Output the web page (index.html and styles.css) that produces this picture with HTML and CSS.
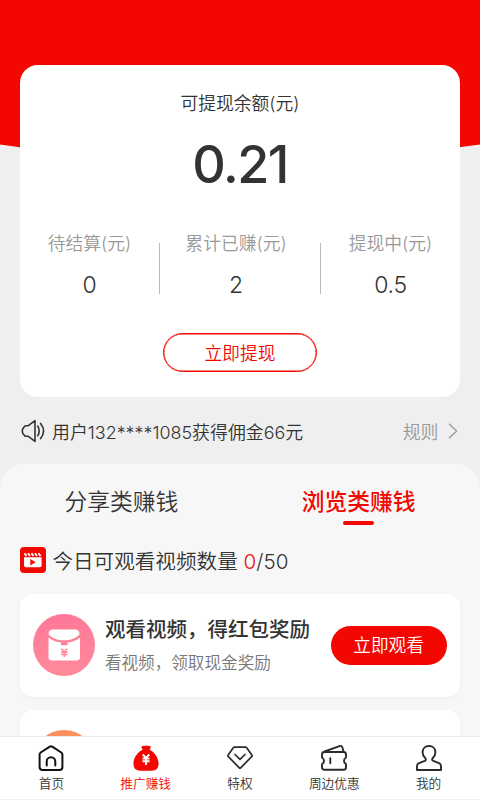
FILE: index.html
```html
<!DOCTYPE html>
<html lang="zh-CN">
<head>
<meta charset="utf-8">
<meta name="viewport" content="width=device-width, initial-scale=1">
<title>推广赚钱</title>
<link rel="stylesheet" href="styles.css">
</head>
<body>
<div class="app">
  <main class="content">
    <div class="hero"></div>
    <section class="balance">
      <div class="balance-label">可提现余额(元)</div>
      <div class="balance-value">0.21</div>
      <div class="stats">
        <div class="stat"><span class="stat-label">待结算(元)</span><span class="stat-value">0</span></div>
        <div class="stat stat-mid"><span class="stat-label">累计已赚(元)</span><span class="stat-value">2</span></div>
        <div class="stat"><span class="stat-label">提现中(元)</span><span class="stat-value">0.5</span></div>
      </div>
      <button class="withdraw">立即提现</button>
    </section>

    <div class="notice">
      <svg class="speaker" width="24" height="24" viewBox="0 0 24 24" fill="none" stroke="#333" stroke-width="1.6" stroke-linecap="round" stroke-linejoin="round">
        <path d="M14 1.600V22.400L7 17.200H4.600Q3.600 17.200 3.300 16.200L1.700 14.300Q.9 12 1.700 9.700L3.300 7.800Q3.600 6.800 4.600 6.800H7Z"/>
        <path d="M16.800 7.200Q19.600 12 16.800 16.800M19.600 4.400Q25.600 12 19.600 19.600"/>
      </svg>
      <span class="notice-text">用户132****1085获得佣金66元</span>
      <a class="rules">规则</a>
      <svg class="chevron" width="10" height="16" viewBox="0 0 10 16" fill="none" stroke="#999" stroke-width="1.3"><path d="M1 .8L8.600 8L1 15.200"/></svg>
    </div>

    <section class="panel">
      <div class="tabs">
        <div class="tab">分享类赚钱</div>
        <div class="tab tab-active">浏览类赚钱</div>
      </div>
      <div class="quota">
        <svg class="clip" width="26" height="26" viewBox="0 0 26 26">
          <rect width="26" height="26" rx="4" fill="#f20800"/>
          <path d="M4 10.200H21.600V18.500Q21.600 20.200 19.900 20.200H5.700Q4 20.200 4 18.500Z" fill="#fff"/>
          <path d="M4.500 6.200L6.500 9M8 6.200L10 9M11.500 6.200L13.500 9M15 6.200L17 9M18.500 6.200L20.500 9" stroke="#fff" stroke-width="1.900"/>
          <path d="M10.300 12L15.600 15.200L10.300 18.400Z" fill="#f20800"/>
        </svg>
        <span>今日可观看视频数量 <b class="quota-used">0</b>/50</span>
      </div>
      <article class="task">
        <svg class="task-icon" width="62" height="62" viewBox="0 0 62 62">
          <defs><linearGradient id="pink" x1="0" y1="0" x2="0" y2="1"><stop offset="0" stop-color="#ff7897"/><stop offset="1" stop-color="#ff8a9c"/></linearGradient></defs>
          <circle cx="31" cy="31" r="31" fill="url(#pink)"/>
          <path d="M15.500 20.500Q15.500 15.500 20 15.500H42Q46.500 15.500 46.500 20.500C40 28.200 22 28.200 15.500 20.500Z" fill="#fff"/>
          <path d="M15.500 23.500C20 27 24 28.200 28 28.500V31.200H34.500V28.500C38.500 28.200 42.500 27 47 23.500V43Q47 46.500 43.500 46.500H19Q15.500 46.500 15.500 43Z" fill="#fff"/>
          <path d="M28.300 34.700L31.300 37.900L34.300 34.700M28 38.200H34.600M28 40.500H34.600M31.300 37.900V43" fill="none" stroke="#ff8299" stroke-width="1.500"/>
        </svg>
        <div class="task-copy">
          <div class="task-title">观看视频，得红包奖励</div>
          <div class="task-sub">看视频，领取现金奖励</div>
        </div>
        <button class="watch">立即观看</button>
      </article>
      <article class="task"><span class="task-dot"></span></article>
    </section>
  </main>

  <nav class="nav">
    <a class="nav-item">
      <svg width="26" height="26" viewBox="0 0 26 26" fill="none" stroke="#111" stroke-width="2" stroke-linejoin="round" stroke-linecap="round"><path d="M11.800 1.600Q13 .8 14.200 1.600L23.300 7.500Q24.400 8.300 24.400 9.600V22Q24.400 25 21.400 25H4.600Q1.600 25 1.600 22V9.600Q1.600 8.300 2.700 7.500Z"/><path d="M8.700 20.500V16.500A4.300 4.300 0 0 1 17.300 16.500V20.500"/></svg>
      <span>首页</span>
    </a>
    <a class="nav-item nav-active">
      <svg width="26" height="26" viewBox="0 0 26 26"><path d="M9.200 1.200Q10.200.2 11.300 1Q13 -.2 14.700 1Q15.800.2 17 1.200L18 2L16.600 4.700C21.500 7 25.600 13 25.600 18.500Q25.600 25.800 18.500 25.800H7.500Q.4 25.800.4 18.500C.4 13 4.500 7 9.600 4.700L8.200 2Z" fill="#f20800"/><path d="M9.700 9.500L13 13L16.300 9.500M9.500 13.600H16.500M9.500 16.300H16.500M13 13V20" fill="none" stroke="#fff" stroke-width="1.900"/></svg>
      <span>推广赚钱</span>
    </a>
    <a class="nav-item">
      <svg width="26" height="26" viewBox="0 0 26 26" fill="none" stroke="#2b2b2b" stroke-width="1.700" stroke-linejoin="round" stroke-linecap="round"><path d="M7.300 2.200H18.700Q19.300 2.200 19.700 2.700L25 10.300Q25.300 10.800 24.900 11.300L13.700 22.900Q13 23.500 12.300 22.900L1.100 11.300Q.7 10.800 1 10.300L6.300 2.700Q6.700 2.200 7.300 2.200Z"/><path d="M8 9.500L13 14.300L18 9.500"/></svg>
      <span>特权</span>
    </a>
    <a class="nav-item">
      <svg width="26" height="26" viewBox="0 0 26 26" fill="none" stroke="#2b2b2b" stroke-width="1.900" stroke-linejoin="round" stroke-linecap="round"><path d="M3.500 7H22.500Q25 7 25 9.500V12.500Q23 13.500 23 15.700Q23 18 25 19V22.200Q25 24.800 22.500 24.800H3.500Q1 24.800 1 22.200V19Q3 18 3 15.700Q3 13.500 1 12.500V9.500Q1 7 3.500 7Z"/><path d="M3.500 6.500L18.500 1.100Q20.700.4 21.300 2.300L22.500 6.500M9.300 13.200V18.200"/></svg>
      <span>周边优惠</span>
    </a>
    <a class="nav-item">
      <svg width="26" height="26" viewBox="0 0 26 26" fill="none" stroke="#2b2b2b" stroke-width="1.900" stroke-linejoin="round"><path d="M13 1C17 1 19.400 3.800 19.400 7.400C19.400 10.300 18.200 11.800 16.600 13.300Q15.400 15 17.300 15.900L23 18.100Q25 19 25 21V25H1V21Q1 19 3 18.100L8.700 15.900Q10.600 15 9.400 13.300C7.800 11.800 6.600 10.300 6.600 7.400C6.600 3.800 9 1 13 1Z"/></svg>
      <span>我的</span>
    </a>
  </nav>
</div>
</body>
</html>
```
FILE: styles.css
```css
* { box-sizing: border-box; }
body {
  margin: 0;
  background: #efefef;
  color: #333;
  font-family: Inter, "Noto Sans CJK SC", sans-serif;
  font-weight: 350;
  white-space: nowrap;
}
button { font: inherit; padding: 0; }
.app {
  display: flex;
  flex-direction: column;
  height: 800px;
  overflow: hidden;
}
.content { flex: 1; min-height: 0; overflow: hidden; }

.hero {
  height: 165px;
  background: #f20800;
  clip-path: path("M0 0H480V144.500Q240 180 0 144.500Z");
}
.balance {
  position: relative;
  display: flex;
  flex-direction: column;
  align-items: center;
  height: 332.500px;
  margin: -100.400px 20.400px 0;
  padding-top: 26.400px;
  background: #fff;
  border-radius: 18px;
}
.balance-label { font-size: 17.800px; line-height: 26px; }
.balance-value {
  height: 60px;
  margin-top: 18px;
  font-size: 52px;
  font-weight: 500;
  line-height: 60px;
  letter-spacing: -1.500px;
}
.stats {
  display: grid;
  grid-template-columns: 139px 162px 139px;
  width: 440px;
  margin-top: 36px;
}
.stat {
  position: relative;
  display: flex;
  flex-direction: column;
  align-items: center;
  gap: 15px;
}
.stat-mid { right: 4px; }
.stat-mid::before, .stat-mid::after {
  content: "";
  position: absolute;
  top: 12px;
  left: 3.500px;
  width: 1px;
  height: 51px;
  background: #bbb;
}
.stat-mid::after { left: 164.500px; }
.stat-label { color: #999; font-size: 17.800px; line-height: 26px; }
.stat-value { font-size: 23px; line-height: 26px; letter-spacing: -.3px; }
.withdraw {
  width: 154px;
  height: 39px;
  margin-top: 35px;
  padding-bottom: 2px;
  border: 1.500px solid #f20800;
  border-radius: 20px;
  background: #fff;
  box-shadow: inset 0 0 0 .4px #f20800;
  color: #f20800;
  font-size: 17.700px;
}

.notice {
  display: flex;
  align-items: center;
  height: 67px;
  padding: 0 22.500px 0 21px;
  font-size: 17.900px;
}
.notice-text { margin-left: 7px; }
.rules { margin-left: auto; color: #999; }
.chevron { margin-left: 9px; }

.panel {
  height: 400px;
  padding: 17.500px 20.400px 0;
  background: #f7f7f7;
  border-radius: 24px 24px 0 0;
}
.tabs {
  display: flex;
  justify-content: space-between;
  padding: 0 44px;
  font-size: 22.800px;
  line-height: 39px;
}
.tab-active {
  display: flex;
  flex-direction: column;
  align-items: center;
  color: #f20800;
  font-weight: 500;
}
.tab-active::after {
  content: "";
  width: 31px;
  height: 4px;
  border-radius: 2px;
  background: #f20800;
}
.quota {
  display: flex;
  align-items: center;
  gap: 6px;
  height: 28px;
  margin-top: 21.500px;
  font-size: 20.600px;
}
.quota-used { color: #f20800; font-weight: inherit; }
.task {
  display: flex;
  align-items: center;
  height: 102.500px;
  margin-top: 20px;
  padding: 0 13px 0 12.500px;
  background: #fff;
  border-radius: 13px;
  box-shadow: 0 2px 6px rgba(0, 0, 0, .03);
}
.task + .task { margin-top: 13px; }
.task-copy { margin-left: 10px; }
.task-title { padding-top: 2px; font-size: 20.500px; font-weight: 500; line-height: 34px; }
.task-sub { color: #777; font-size: 16.600px; line-height: 32px; }
.watch {
  width: 116px;
  height: 39px;
  margin-left: auto;
  padding-bottom: 2px;
  border: 0;
  border-radius: 20px;
  background: #f20800;
  color: #fff;
  font-size: 17.700px;
}
.task-dot {
  width: 62px;
  height: 62px;
  border-radius: 50%;
  background: #ff915e;
}

.nav {
  position: relative;
  display: grid;
  grid-template-columns: repeat(5, 94.300px);
  justify-content: center;
  height: 64px;
  padding-top: 8px;
  border-top: 1px solid #ebebeb;
  border-bottom: 1px solid #efefef;
  background: #fff;
}
.nav-item {
  display: flex;
  flex-direction: column;
  align-items: center;
  font-size: 12.700px;
  line-height: 20px;
}
.nav-item svg { margin-bottom: 3px; }
.nav-active { color: #f20800; }
```
